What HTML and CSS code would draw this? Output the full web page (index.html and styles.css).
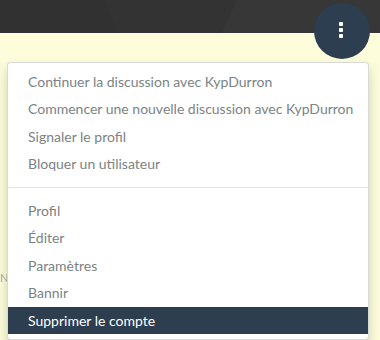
FILE: index.html
```html
<!DOCTYPE html>
<html lang="fr">
<head>
    <meta charset="utf-8" />
    <title>Profil</title>
    <link rel="stylesheet" href="styles.css">
</head>
<body>
    <header class="topbar"></header>

    <main class="content">
        <p class="label">N</p>
    </main>

    <div class="actions">
        <button class="btnMenu" type="button" aria-label="Actions">
            <svg width="4" height="16" viewBox="0 0 4 16">
                <rect x="0" y="0" width="4" height="4" rx="0.8" fill="#fff" />
                <rect x="0" y="6" width="4" height="4" rx="0.8" fill="#fff" />
                <rect x="0" y="12" width="4" height="4" rx="0.8" fill="#fff" />
            </svg>
        </button>

        <ul class="dropdownMenu">
            <li><a href="#">Continuer la discussion avec KypDurron</a></li>
            <li><a href="#">Commencer une nouvelle discussion avec KypDurron</a></li>
            <li><a href="#">Signaler le profil</a></li>
            <li><a href="#">Bloquer un utilisateur</a></li>
            <li class="divider"></li>
            <li><a href="#">Profil</a></li>
            <li><a href="#">Éditer</a></li>
            <li><a href="#">Paramètres</a></li>
            <li><a href="#">Bannir</a></li>
            <li class="active"><a href="#">Supprimer le compte</a></li>
        </ul>
    </div>
</body>
</html>
```

FILE: styles.css
```css
body {
    margin: 0;
    background-color: #fdfddc;
    font-family: Lato, "Open Sans", sans-serif;
    font-size: 14px;
    line-height: 21.43px;
    overflow: hidden;
}

.topbar {
    height: 33px;
    background-color: #333;
    background-image:
        linear-gradient(115deg, transparent 60%, rgba(255,255,255,0.02) 60%),
        linear-gradient(70deg, rgba(0,0,0,0.04) 30%, transparent 30%);
}

.content {
    padding-top: 234px;
    width: 7px;
    overflow: hidden;
}

.label {
    margin: 0;
    font-size: 11px;
    color: #aaa;
}

.btnMenu {
    position: absolute;
    top: 3px;
    left: 314px;
    width: 56px;
    height: 56px;
    border: 0;
    border-radius: 50%;
    background-color: #2c3e50;
    display: flex;
    align-items: center;
    justify-content: center;
    padding: 0 2px 2px 0;
    cursor: pointer;
}

.btnMenu svg {
    display: block;
}

.dropdownMenu {
    position: absolute;
    top: 62px;
    left: 7px;
    width: 360px;
    margin: 0;
    padding: 5px 0;
    list-style: none;
    background-color: #fff;
    border: 1px solid rgba(0, 0, 0, 0.15);
    border-radius: 4px;
    box-shadow: 0 6px 12px rgba(0, 0, 0, 0.175);
}

.dropdownMenu > li > a {
    display: block;
    padding: 3px 20px;
    color: #7b8385;
    text-decoration: none;
    white-space: nowrap;
}

.dropdownMenu > .active > a {
    background-color: #2c3e50;
    color: #fff;
}

.dropdownMenu > .divider {
    height: 1px;
    margin: 9px 0;
    background-color: #e5e5e5;
}
```
